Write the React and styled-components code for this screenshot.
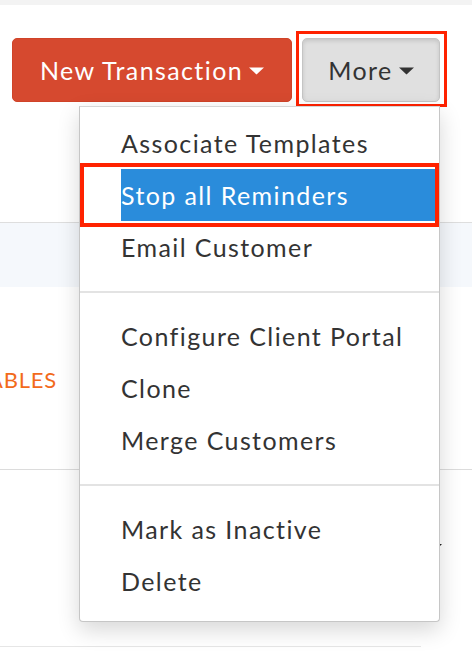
import React from 'react'
import styled, { createGlobalStyle } from 'styled-components'

const GlobalStyle = createGlobalStyle`
  body {
    margin: 0;
    background: #fff;
    font-family: "Lato", "Liberation Sans", sans-serif;
  }
`

const groups = [
    ['Associate Templates', 'Stop all Reminders', 'Email Customer'],
    ['Configure Client Portal', 'Clone', 'Merge Customers'],
    ['Mark as Inactive', 'Delete'],
]

const Caret = ({ color }) => (
    <CaretIcon width="15" height="8" viewBox="0 0 15 8">
        <path d="M0 0.5 H15 L7.5 7.5 Z" fill={color} />
    </CaretIcon>
)

const App = () => {
    return (
        <Page>
            <GlobalStyle />
            <TopStrip />
            <Header>
                <Toolbar>
                    <NewButton>
                        New Transaction <Caret color="#fff" />
                    </NewButton>
                    <Highlight>
                        <MoreButton>
                            More <Caret color="#333" />
                        </MoreButton>
                    </Highlight>

                    <Menu>
                        {groups.map((items, gi) => (
                            <React.Fragment key={gi}>
                                {gi > 0 && <Divider />}
                                {items.map((label) => (
                                    <Item key={label} $active={label === 'Stop all Reminders'}>
                                        {label}
                                    </Item>
                                ))}
                            </React.Fragment>
                        ))}
                    </Menu>
                </Toolbar>
            </Header>
            <Band />
            <SummaryRow>
                <Clip>
                    <Label>RECEIVABLES</Label>
                </Clip>
            </SummaryRow>
            <LowerRow>
                <SmallCaret />
            </LowerRow>
        </Page>
    )
}

export default App

const Page = styled.div`
    width: 472px;
    height: 654px;
    overflow: hidden;
    background: #fff;
`

const TopStrip = styled.div`
    height: 5px;
    background: #f3f3f3;
`

const Header = styled.div`
    height: 218px;
    box-sizing: border-box;
    padding: 33px 0 0 12px;
    border-bottom: 1px solid #dedede;
`

const Toolbar = styled.div`
    position: relative;
    display: flex;
    gap: 10px;
`

const CaretIcon = styled.svg`
    margin-left: 6px;
    margin-top: 2px;
`

const BaseButton = styled.button`
    height: 64px;
    box-sizing: border-box;
    border-radius: 5px;
    font-family: "Lato", "Liberation Sans", sans-serif;
    font-size: 25px;
    letter-spacing: 1.4px;
    display: flex;
    align-items: center;
    justify-content: center;
    padding: 0;
    cursor: pointer;
`

const NewButton = styled(BaseButton)`
    width: 280px;
    background: #d6492f;
    color: #fff;
    border: 1px solid #d04328;
`

/* red annotation frame drawn round the More button */
const Highlight = styled.div`
    margin: -7px -7px -5px -6px;
    padding: 4px 4px 2px 3px;
    border: 3px solid #ff2200;
    display: flex;
`

const MoreButton = styled(BaseButton)`
    width: 138px;
    background: #e0e0e0;
    color: #333;
    border: 1px solid #c4c4c4;
    box-shadow: inset 0 2px 4px rgba(0, 0, 0, 0.12);
`

const Menu = styled.div`
    position: absolute;
    top: 68px;
    left: 67px;
    width: 361px;
    box-sizing: border-box;
    padding: 10px 0 14px;
    background: #fff;
    border: 1px solid #c6c6c6;
    border-top-color: #d6d6d6;
    border-radius: 0 0 4px 4px;
    box-shadow: 0 8px 22px rgba(0, 0, 0, 0.16);
    z-index: 2;
`

const Item = styled.div`
    position: relative;
    height: 52px;
    line-height: 52px;
    padding-left: 41px;
    font-size: 25px;
    letter-spacing: 1.4px;
    color: #333;
    white-space: nowrap;

    ${({ $active }) => $active && `
        height: 64px;
        box-sizing: border-box;
        margin: -6px 0;
        padding: 2px 0 2px 37px;
        border: 4px solid #ff2200;
        background: #2a8cdb;
        background-clip: content-box;
        color: #fff;
    `}
`

const Divider = styled.div`
    height: 2px;
    background: #e3e3e3;
    margin: 18px 0 17px;
`

const Band = styled.div`
    height: 64px;
    background: #f5f8fc;
`

const SummaryRow = styled.div`
    height: 183px;
    box-sizing: border-box;
    border-bottom: 1px solid #dcdcdc;
    display: flex;
    align-items: center;
    padding-top: 2px;
`

const Clip = styled.div`
    width: 57px;
    overflow: hidden;
    display: flex;
    justify-content: flex-end;
`

const Label = styled.span`
    font-size: 22px;
    letter-spacing: 0.8px;
    color: #f26a1b;
    white-space: nowrap;
`

const LowerRow = styled.div`
    height: 177px;
    width: 421px;
    box-sizing: border-box;
    border-bottom: 1px solid #e6e6e6;
    display: flex;
    justify-content: flex-end;
    align-items: flex-start;
    padding-top: 74px;
`

const SmallCaret = styled.div`
    width: 0;
    height: 0;
    margin-right: -21px;
    border-left: 4px solid transparent;
    border-right: 4px solid transparent;
    border-top: 4px solid #222;
`
